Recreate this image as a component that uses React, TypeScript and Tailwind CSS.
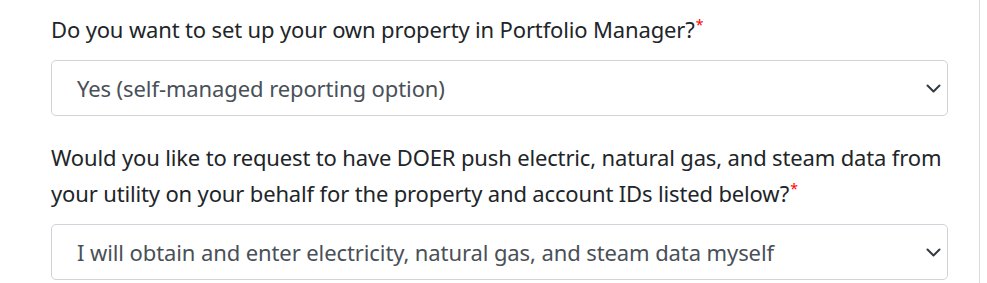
const FONT = "font-['Noto_Sans','Open_Sans',sans-serif]";

function Chevron() {
  return (
    <svg width="15" height="9" viewBox="0 0 15 9" fill="none" stroke="#343a40" strokeWidth="2" strokeLinecap="round" strokeLinejoin="round">
      <path d="M1.5 1.5l6 6 6-6" />
    </svg>
  );
}

function Field({ label, value }: { label: string; value: string }) {
  return (
    <div className="flex flex-col">
      <label className="text-[22px] leading-[36px] tracking-[-0.15px] text-[#212529]">
        {label}
        <span className="relative -top-[8px] ml-[1px] text-[14px] leading-none text-[#ff0000]">*</span>
      </label>
      <div className="mt-[13px] flex h-[56px] items-center justify-between rounded-[5px] border border-[#ced4da] bg-white pl-[25px] pr-[6px]">
        <span className="text-[22px] tracking-[-0.1px] text-[#495057]">{value}</span>
        <Chevron />
      </div>
    </div>
  );
}

export default function App() {
  return (
    <div className={`${FONT} flex h-[283px] w-[987px] overflow-hidden bg-white`}>
      <div className="flex w-[979px] flex-col gap-[23px] pl-[51px] pr-[31px] pt-[11px]">
        <Field label="Do you want to set up your own property in Portfolio Manager?" value="Yes (self-managed reporting option)" />
        <Field
          label="Would you like to request to have DOER push electric, natural gas, and steam data from your utility on your behalf for the property and account IDs listed below?"
          value="I will obtain and enter electricity, natural gas, and steam data myself"
        />
      </div>
      <div className="h-full w-px bg-[#dcdcdc]" />
    </div>
  );
}
